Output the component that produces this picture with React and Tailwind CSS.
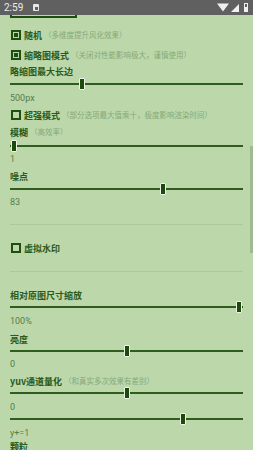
import React from 'react'

const cjk = { fontFamily: '"Noto Sans CJK SC", "Noto Sans", sans-serif' }

// status bar at top
const StatusBar = () => (
  <div className="h-[15px] bg-[#606060] flex items-center pl-[4px] pr-[5px] text-[#ececec]">
    <span className="text-[10px] leading-none" style={{ fontFamily: 'Roboto, sans-serif' }}>2:59</span>
    <div className="ml-[10px] w-[6px] h-[7px] bg-[#e8e8e8] rounded-[1px] flex items-end justify-center">
      <div className="w-[3px] h-[3px] bg-[#616161] mb-[1px]" />
    </div>
    <div className="flex-1" />
    <svg width="12" height="9" viewBox="0 0 12 9"><path d="M0 0.5 L12 0.5 L6 8.5 Z" fill="#f0f0f0" /></svg>
    <svg width="8" height="8" viewBox="0 0 8 8" className="ml-[2px]"><path d="M8 0 L8 8 L0 8 Z" fill="#f0f0f0" /></svg>
    <div className="ml-[5px] w-[4px] h-[9px] border border-[#f0f0f0] flex items-end">
      <div className="w-full h-[4px] bg-[#f0f0f0]" />
    </div>
  </div>
)

const Check = ({ on, title, hint, mt }) => (
  <div className={`h-[14px] flex items-center pl-[11px] ${mt}`}>
    {on ? (
      <div className="w-[10px] h-[10px] border-[2px] border-[#1f4f10] p-[1px]">
        <div className="w-full h-full bg-[#1f4f10]" />
      </div>
    ) : (
      <div className="w-[10px] h-[10px] border-[2px] border-[#1f4f10]" />
    )}
    <span className="ml-[3px] text-[9px] leading-none font-bold text-[#2b5a1a]" style={cjk}>{title}</span>
    {hint && <span className="ml-[2px] text-[7.5px] leading-none text-[#86a878]" style={cjk}>（{hint}）</span>}
  </div>
)

const Title = ({ children, hint, mt }) => (
  <div className={`h-[12px] flex items-center pl-[10px] ${mt}`}>
    <span className="text-[9px] leading-none font-bold text-[#2b5a1a]" style={cjk}>{children}</span>
    {hint && <span className="ml-[2px] text-[7.5px] leading-none text-[#86a878]" style={cjk}>（{hint}）</span>}
  </div>
)

const Val = ({ children, mt }) => (
  <div className={`h-[12px] flex items-center pl-[10px] ${mt}`}>
    <span className="text-[9px] leading-none text-[#567d47]" style={{ fontFamily: 'Roboto, sans-serif' }}>{children}</span>
  </div>
)

const Slider = ({ x, mt }) => (
  <div className={`relative h-[12px] mx-[10px] ${mt}`}>
    <div className="absolute left-0 right-0 top-[5px] h-[2px] bg-[#2e5d1d]" />
    <div
      className="absolute top-0 w-[6px] h-[12px] bg-[#1c4a0c] border border-[#eef5e8] rounded-[1px]"
      style={{ left: x - 10 }}
    />
  </div>
)

const Divider = ({ mt }) => <div className={`h-[1px] mx-[10px] bg-[#abc99b] ${mt}`} />

export default function App() {
  return (
    <div className="relative w-[253px] h-[450px] overflow-hidden bg-[#bcd8ab]">
      <StatusBar />
      <div className="ml-[10px] w-[67px] h-[3px] border-x-[2px] border-b-[2px] border-[#1f4f10]" />

      <Check on title="随机" hint="多维度提升风化效果" mt="mt-[10px]" />
      <Check on title="缩略图模式" hint="关闭对性能影响极大，谨慎使用" mt="mt-[6px]" />
      <Title mt="mt-[3px]">略缩图最大长边</Title>
      <Slider x={79} mt="mt-[1px]" />
      <Val mt="mt-[2px]">500px</Val>
      <Check title="超强模式" hint="部分选项最大值乘十，极度影响渲染时间" mt="mt-[4px]" />
      <Title hint="高效率" mt="mt-[4px]">模糊</Title>
      <Slider x={11} mt="mt-[2px]" />
      <Val mt="mt-[1px]">1</Val>
      <Title mt="mt-[5px]">噪点</Title>
      <Slider x={160} mt="mt-[1px]" />
      <Val mt="mt-[1px]">83</Val>
      <Divider mt="mt-[16px]" />
      <Check title="虚拟水印" mt="mt-[16px]" />
      <Divider mt="mt-[16px]" />
      <Title mt="mt-[17px]">相对原图尺寸缩放</Title>
      <Slider x={236} />
      <Val mt="mt-[2px]">100%</Val>
      <Title mt="mt-[6px]">亮度</Title>
      <Slider x={124} />
      <Val mt="mt-[1px]">0</Val>
      <Title hint="和真实多次效果有差别" mt="mt-[5px]">yuv通道量化</Title>
      <Slider x={124} />
      <Val mt="mt-[2px]">0</Val>
      <Slider x={180} />
      <Val mt="mt-[2px]">y+=1</Val>
      <Title mt="mt-[1px]">颗粒</Title>

      {/* scrollbar */}
      <div className="absolute right-0 top-[146px] w-[3px] h-[107px] bg-[#9fba91]" />
    </div>
  )
}
